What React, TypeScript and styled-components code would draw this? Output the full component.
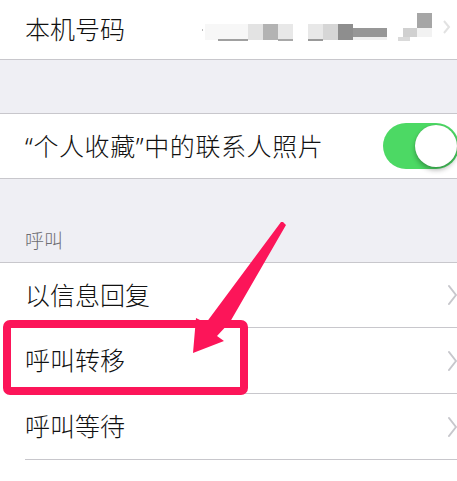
import React from "react";
import styled, {createGlobalStyle} from "styled-components";

const GlobalStyle = createGlobalStyle`
    html, body {
        margin: 0;
        padding: 0;
        background: #efeff4;
    }
`;

const Page = styled.div`
    position: relative;
    width: 457px;
    height: 481px;
    overflow: hidden;
    background: #efeff4;
    font-family: "Noto Sans", "Noto Sans CJK SC", sans-serif;
    color: #111;
`;

const Group = styled.div<{ $noTop?: boolean }>`
    background: #fff;
    border-top: ${p => p.$noTop ? "none" : "1px solid #c8c7cc"};
    border-bottom: 1px solid #c8c7cc;
`;

const OpenGroup = styled.div`
    background: #fff;
    border-top: 1px solid #c8c7cc;
`;

const Row = styled.div<{ $height: number }>`
    display: flex;
    align-items: center;
    height: ${p => p.$height}px;
    padding-left: 25px;
    overflow: hidden;
`;

const InsetRow = styled.div`
    padding-left: 25px;
`;

const InsetInner = styled.div<{ $height: number }>`
    display: flex;
    align-items: center;
    justify-content: space-between;
    height: ${p => p.$height}px;
    border-bottom: 1px solid #c8c7cc;
    overflow: hidden;
`;

const Label = styled.span<{ $spread?: boolean }>`
    font-size: 25px;
    font-weight: 300;
    line-height: 1;
    white-space: nowrap;
    letter-spacing: ${p => p.$spread ? "0.6px" : "0"};
`;

const Gap = styled.div<{ $height: number }>`
    height: ${p => p.$height}px;
`;

const SectionHead = styled.div`
    height: 83px;
    box-sizing: border-box;
    padding: 52px 0 0 25px;
    font-size: 19px;
    font-weight: 300;
    line-height: 20px;
    color: #6d6d72;
`;

const Mosaic = styled.svg`
    margin-left: auto;
    flex-shrink: 0;
`;

const SmallChevron = styled.svg`
    margin-left: 8px;
    margin-right: 6px;
    flex-shrink: 0;
`;

const Chevron = styled.svg`
    flex-shrink: 0;
    margin-right: -2px;
`;

const Track = styled.div`
    margin-left: auto;
    margin-right: -2px;
    flex-shrink: 0;
    width: 76px;
    height: 46px;
    border-radius: 23px;
    background: #4cd964;
    display: flex;
    align-items: center;
    justify-content: flex-end;
    padding-right: 2px;
    box-sizing: border-box;
`;

const Knob = styled.div`
    width: 42px;
    height: 42px;
    border-radius: 50%;
    background: #fff;
    box-shadow: 0 3px 5px rgba(0, 0, 0, 0.3), 0 0 1px rgba(0, 0, 0, 0.2);
`;

const Annotation = styled.svg`
    position: absolute;
    left: 0;
    top: 0;
    pointer-events: none;
`;

const blocks: [number, number, number, number, string][] = [
    [2, 29, 1, 2, "#bbbbbb"],
    [5, 24, 43, 16, "#f7f7f7"],
    [18, 39, 30, 2, "#a0a0a0"],
    [48, 24, 15, 16, "#e3e3e3"],
    [63, 24, 15, 16, "#b3b3b3"],
    [78, 24, 15, 16, "#e8e8e8"],
    [78, 39, 15, 2, "#a8a8a8"],
    [108, 24, 15, 16, "#e8e8e8"],
    [108, 39, 15, 2, "#999999"],
    [123, 24, 15, 16, "#d6d6d6"],
    [138, 24, 15, 16, "#8e8e8e"],
    [153, 28, 34, 9, "#979797"],
    [153, 37, 34, 3, "#f0f0f0"],
    [203, 28, 14, 9, "#d0d0d0"],
    [198, 37, 12, 4, "#dadada"],
    [217, 13, 15, 15, "#a6a6a6"],
    [217, 28, 15, 9, "#f2f2f2"],
];

const ChevronIcon = () => (
    <Chevron width="12" height="22" viewBox="0 0 12 22">
        <polyline points="2,2 9,11 2,20" fill="none" stroke="#c7c7cc" strokeWidth="2"
                  strokeLinecap="round" strokeLinejoin="round"/>
    </Chevron>
);

const NavRow = ({label, height}: { label: string, height: number }) => (
    <InsetRow>
        <InsetInner $height={height}>
            <Label>{label}</Label>
            {label && <ChevronIcon/>}
        </InsetInner>
    </InsetRow>
);

export default function App() {
    return (
        <>
            <GlobalStyle/>
            <Page>
                <Group $noTop>
                    <Row $height={59}>
                        <Label>本机号码</Label>
                        <Mosaic width="235" height="59" viewBox="0 0 235 59">
                            {blocks.map(([x, y, w, h, c], i) => (
                                <rect key={i} x={x} y={y} width={w} height={h} fill={c}/>
                            ))}
                        </Mosaic>
                        <SmallChevron width="8" height="59" viewBox="0 0 8 59">
                            <polyline points="1,21 6,27 1,33" fill="none" stroke="#e2e2e2" strokeWidth="2"/>
                        </SmallChevron>
                    </Row>
                </Group>
                <Gap $height={53}/>
                <Group>
                    <Row $height={64}>
                        <Label $spread>“个人收藏”中的联系人照片</Label>
                        <Track>
                            <Knob/>
                        </Track>
                    </Row>
                </Group>
                <SectionHead>呼叫</SectionHead>
                <OpenGroup>
                    <NavRow label="以信息回复" height={64}/>
                    <NavRow label="呼叫转移" height={65}/>
                    <NavRow label="呼叫等待" height={65}/>
                    <NavRow label="" height={40}/>
                </OpenGroup>
                <Annotation width="457" height="481" viewBox="0 0 457 481">
                    <rect x="7" y="324" width="237" height="67" rx="3" fill="none"
                          stroke="#fc1559" strokeWidth="8"/>
                    <polygon
                        points="283,222 286,225 230,322 217,336 224,341 193,353 196,318 206,323 281,222"
                        fill="#fc1559"/>
                </Annotation>
            </Page>
        </>
    );
}
